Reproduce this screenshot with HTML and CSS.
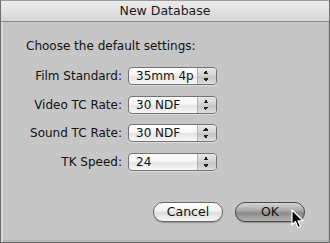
FILE: index.html
```html
<!DOCTYPE html>
<html>
	<head>
		<meta charset="utf-8">
		<title>New Database</title>
		<link rel="stylesheet" href="styles.css">
	</head>
	<body>
		<div class="window">
			<div class="titlebar">New Database</div>
			<div class="content">
				<p class="intro">Choose the default settings:</p>
				<div class="form">
					<label>Film Standard:</label>
					<div class="popup"><span>35mm 4p</span><i class="arrows"></i></div>
					<label>Video TC Rate:</label>
					<div class="popup"><span>30 NDF</span><i class="arrows"></i></div>
					<label>Sound TC Rate:</label>
					<div class="popup"><span>30 NDF</span><i class="arrows"></i></div>
					<label>TK Speed:</label>
					<div class="popup"><span>24</span><i class="arrows"></i></div>
				</div>
				<div class="buttons">
					<button class="btn">Cancel</button>
					<button class="btn default">OK</button>
				</div>
			</div>
			<!-- mouse pointer over the OK button -->
			<svg class="cursor" width="14" height="21" viewBox="0 0 14 21">
				<path d="M1 1 L1 16 L4.5 12.5 L7 18.5 L9.5 17.5 L7 11.8 L12 11.8 Z" fill="#000" stroke="#fff" stroke-width="1.2" stroke-linejoin="round"/>
			</svg>
		</div>
	</body>
</html>
```
FILE: styles.css
```css
html, body {
	margin: 0;
	padding: 0;
	background: #c4c4c4;
}

.window {
	position: relative;
	box-sizing: border-box;
	width: 330px;
	height: 243px;
	background: #c6c6c6;
	border: 1px solid #6e6e6e;
	border-top-color: #9a9a9a;
	font: 12px/16px "DejaVu Sans", "Liberation Sans", sans-serif;
	color: #111;
	box-shadow: inset 2px 0 0 #d8d8d8, inset -1px 0 0 #b4b4b4, inset 0 -2px 0 #b8b8b8;
}

.titlebar {
	height: 20px;
	line-height: 20px;
	text-align: center;
	font-size: 12.5px;
	color: #1a1a1a;
	background: linear-gradient(#ececec, #d6d6d6);
	border-bottom: 1px solid #8a8a8a;
}

.content {
	padding: 0 24px 0 0;
}

.intro {
	margin: 16px 0 0 25px;
}

.form {
	display: grid;
	grid-template-columns: 113px 89px;
	column-gap: 6px;
	row-gap: 10.5px;
	align-items: center;
	margin-top: 13px;
	padding-left: 8px;
}

.form label {
	text-align: right;
	white-space: nowrap;
}

.popup {
	position: relative;
	display: flex;
	align-items: center;
	box-sizing: border-box;
	height: 18px;
	padding-left: 7px;
	border: 1px solid #727272;
	border-radius: 4px;
	white-space: nowrap;
	background: linear-gradient(#ffffff 0%, #f6f6f6 45%, #e4e4e4 55%, #f8f8f8 100%);
	box-shadow: 0 1px 0 rgba(255, 255, 255, 0.4);
}

.popup span {
	flex: 1;
	line-height: 16px;
}

.arrows {
	align-self: stretch;
	width: 18px;
	border-left: 1px solid #b0b0b0;
	border-radius: 0 3px 3px 0;
	background:
		linear-gradient(to bottom right, transparent 50%, #222 50%) 5px 3px / 3px 3px no-repeat,
		linear-gradient(to bottom left, transparent 50%, #222 50%) 8px 3px / 3px 3px no-repeat,
		linear-gradient(to top right, transparent 50%, #222 50%) 5px 10px / 3px 3px no-repeat,
		linear-gradient(to top left, transparent 50%, #222 50%) 8px 10px / 3px 3px no-repeat,
		linear-gradient(#e8e8e8, #d2d2d2 50%, #c4c4c4 55%, #e0e0e0);
}

.buttons {
	display: flex;
	justify-content: flex-end;
	gap: 12px;
	margin-top: 31px;
}

.btn {
	box-sizing: border-box;
	width: 70px;
	height: 20px;
	padding: 0;
	font: inherit;
	font-size: 12.5px;
	color: #111;
	border: 1px solid #6a6a6a;
	border-radius: 10px;
	background: linear-gradient(#ffffff 0%, #f2f2f2 45%, #dcdcdc 55%, #fafafa 100%);
	box-shadow: 0 1px 1px rgba(0, 0, 0, 0.25);
}

.btn.default {
	border-color: #4a4a4a;
	background: linear-gradient(#d8d8d8 0%, #a6a6a6 45%, #8a8a8a 55%, #b4b4b4 100%);
}

.cursor {
	position: absolute;
	left: 290px;
	top: 208px;
}
```
